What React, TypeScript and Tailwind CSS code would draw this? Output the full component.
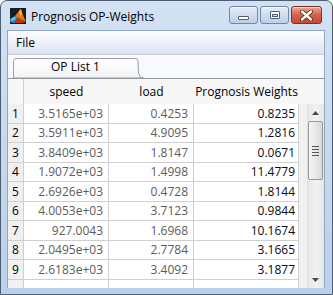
import React from "react";

const rows: [string, string, string][] = [
  ["3.5165e+03", "0.4253", "0.8235"],
  ["3.5911e+03", "4.9095", "1.2816"],
  ["3.8409e+03", "1.8147", "0.0671"],
  ["1.9072e+03", "1.4998", "11.4779"],
  ["2.6926e+03", "0.4728", "1.8144"],
  ["4.0053e+03", "3.7123", "0.9844"],
  ["927.0043", "1.6968", "10.1674"],
  ["2.0495e+03", "2.7784", "3.1665"],
  ["2.6183e+03", "3.4092", "3.1877"],
];

function MatlabIcon() {
  return (
    <svg width="16" height="16" viewBox="0 0 16 16">
      <rect x="0" y="0" width="16" height="16" fill="#1a1a24" />
      <polygon points="0,11 5,8 8,10 4,15 0,14" fill="#2a8fd0" />
      <polygon points="1,11 5,8.5 6,10 2,13" fill="#5fd0f0" />
      <polygon points="5,8 9,3 11,1 13,7 16,14 12,12 8,10" fill="#e8761a" />
      <polygon points="9,3 11,1 12,6 10,8" fill="#f7b535" />
      <polygon points="8,10 12,12 16,14 11,15 4,15" fill="#b83a0e" />
    </svg>
  );
}

function TitleButton({ kind }: { kind: "min" | "max" | "close" }) {
  if (kind === "close") {
    return (
      <div className="w-[31px] h-[18px] rounded-[3px] border border-[#7c3226] bg-gradient-to-b from-[#eaa898] via-[#d2624c] to-[#c44a33] flex items-center justify-center shadow-[inset_0_1px_0_rgba(255,255,255,0.5)]">
        <svg width="13" height="11" viewBox="0 0 13 11">
          <path d="M2 1.5 L11 9.5 M11 1.5 L2 9.5" stroke="#5a1e14" strokeWidth="4" strokeLinecap="round" />
          <path d="M2 1.5 L11 9.5 M11 1.5 L2 9.5" stroke="#ffffff" strokeWidth="2.4" strokeLinecap="round" />
        </svg>
      </div>
    );
  }
  return (
    <div className="w-[29px] h-[18px] rounded-[3px] border border-[#6e86a8] bg-gradient-to-b from-[#e6eef8] via-[#d0deef] to-[#bccfe6] flex items-center justify-center shadow-[inset_0_1px_0_rgba(255,255,255,0.7)]">
      {kind === "min" ? (
        <div className="w-[11px] h-[4px] mt-[5px] bg-white border border-[#4c5f78] rounded-[1px]" />
      ) : (
        <div className="w-[10px] h-[8px] bg-white border border-[#4c5f78] rounded-[1px] flex items-center justify-center">
          <div className="w-[6px] h-[3px] border border-[#4c5f78] bg-[#cfdcec]" />
        </div>
      )}
    </div>
  );
}

export default function App() {
  const font = { fontFamily: '"Open Sans", "Noto Sans", sans-serif' };
  return (
    <div
      className="w-[333px] h-[295px] flex flex-col bg-gradient-to-b from-[#d3e2f3] to-[#bad0e9] rounded-t-[7px] border border-[#4d5d72] overflow-hidden text-[12px] text-black"
      style={font}
    >
      {/* Title bar */}
      <div className="h-[29px] flex items-center pl-[9px] pr-[10px] shrink-0">
        <MatlabIcon />
        <span className="ml-[5px] text-[12px] leading-none mt-[2px]">Prognosis OP-Weights</span>
        <div className="ml-auto flex gap-[2px] items-center mb-[1px]">
          <TitleButton kind="min" />
          <TitleButton kind="max" />
          <TitleButton kind="close" />
        </div>
      </div>
      {/* Client */}
      <div className="flex-1 ml-[6px] mr-[7px] flex flex-col border border-[#8ea7c4] border-b-0 bg-[#f5f6fa]">
        {/* Menu bar */}
        <div className="h-[24px] shrink-0 bg-gradient-to-b from-[#ffffff] to-[#dbe2f1] border-b border-[#c6cfdf] flex items-center pl-[8px]">
          <span className="leading-none mt-[1px]">File</span>
        </div>
        {/* Tab strip */}
        <div className="h-[24px] shrink-0 flex items-end pl-[5px] border-b border-[#8f969f] bg-[#f8f9fc]">
          <div className="relative w-[131px] h-[21px]">
            <svg className="absolute inset-0" width="131" height="21" viewBox="0 0 131 21">
              <defs>
                <linearGradient id="tabg" x1="0" y1="0" x2="0" y2="1">
                  <stop offset="0" stopColor="#ffffff" />
                  <stop offset="1" stopColor="#f3f3f3" />
                </linearGradient>
              </defs>
              <path
                d="M0.5 21 L0.5 4.5 Q0.5 1.5 3.5 1.5 L122.5 1.5 Q124.5 1.5 125 4 L125.5 16 Q126 20.5 130.5 21 Z"
                fill="url(#tabg)"
                stroke="#9aa0a8"
                strokeWidth="1"
              />
            </svg>
            <span className="absolute left-0 w-[125px] top-[4px] text-center leading-none text-[12px]">OP List 1</span>
          </div>
        </div>
        {/* Table */}
        <div className="flex-1 flex flex-col bg-[#f0f0f0] overflow-hidden">
          {/* header */}
          <div className="h-[25px] shrink-0 flex bg-[#f7f7f7]">
            <div className="w-[16px] border-r border-[#d0d0d0]" />
            <div className="w-[85px] flex items-center justify-center">speed</div>
            <div className="w-[85px] flex items-center justify-center">load</div>
            <div className="w-[105px] flex items-center justify-center">Prognosis Weights</div>
            <div className="flex-1" />
          </div>
          <div className="flex-1 flex">
            <div className="w-[291px] flex flex-col">
              {rows.map((r, i) => (
                <div key={i} className={`${i % 2 === 0 ? "h-[20px]" : "h-[19px]"} shrink-0 flex`}>
                  <div className="w-[16px] bg-[#f0f0f0] border-r border-b border-[#cfcfcf] flex items-center justify-center">
                    {i + 1}
                  </div>
                  <div className="w-[85px] bg-white border-r border-b border-[#cfcfcf] flex items-center justify-end pr-[5px] text-[#5c5c5c]">
                    {r[0]}
                  </div>
                  <div className="w-[85px] bg-white border-r border-b border-[#cfcfcf] flex items-center justify-end pr-[5px] text-[#5c5c5c]">
                    {r[1]}
                  </div>
                  <div className="w-[105px] bg-white border-r border-b border-[#cfcfcf] flex items-center justify-end pr-[3px] text-[#0a0a14]">
                    {r[2]}
                  </div>
                </div>
              ))}
              <div className="h-[8px] flex">
                <div className="w-[16px] bg-[#f0f0f0] border-r border-[#cfcfcf]" />
                <div className="w-[85px] bg-white border-r border-[#cfcfcf]" />
                <div className="w-[85px] bg-white border-r border-[#cfcfcf]" />
                <div className="w-[105px] bg-white border-r border-[#cfcfcf]" />
              </div>
            </div>
            <div className="w-[8px] bg-[#f0f0f0]" />
            {/* scrollbar */}
            <div className="w-[18px] bg-gradient-to-r from-[#e6e6e6] via-[#f2f2f2] to-[#e6e6e6] border-l border-[#e0e0e0] flex flex-col items-center">
              <div className="h-[17px] w-full flex items-center justify-center">
                <svg width="7" height="4" viewBox="0 0 7 4">
                  <polygon points="3.5,0 7,4 0,4" fill="#4a4a4a" />
                </svg>
              </div>
              <div className="w-[15px] h-[59px] rounded-[2px] border border-[#979797] bg-gradient-to-r from-[#f4f4f4] via-[#e8e8e8] to-[#d8d8d8] flex flex-col items-center justify-center gap-[2px]">
                <div className="w-[7px] h-[1px] bg-[#555]" />
                <div className="w-[7px] h-[1px] bg-[#555]" />
                <div className="w-[7px] h-[1px] bg-[#555]" />
                <div className="w-[7px] h-[1px] bg-[#555]" />
              </div>
              <div className="flex-1" />
              <div className="h-[17px] w-full flex items-center justify-center">
                <svg width="7" height="4" viewBox="0 0 7 4">
                  <polygon points="0,0 7,0 3.5,4" fill="#4a4a4a" />
                </svg>
              </div>
            </div>
          </div>
        </div>
      </div>
      <div className="h-[9px] shrink-0" />
    </div>
  );
}
